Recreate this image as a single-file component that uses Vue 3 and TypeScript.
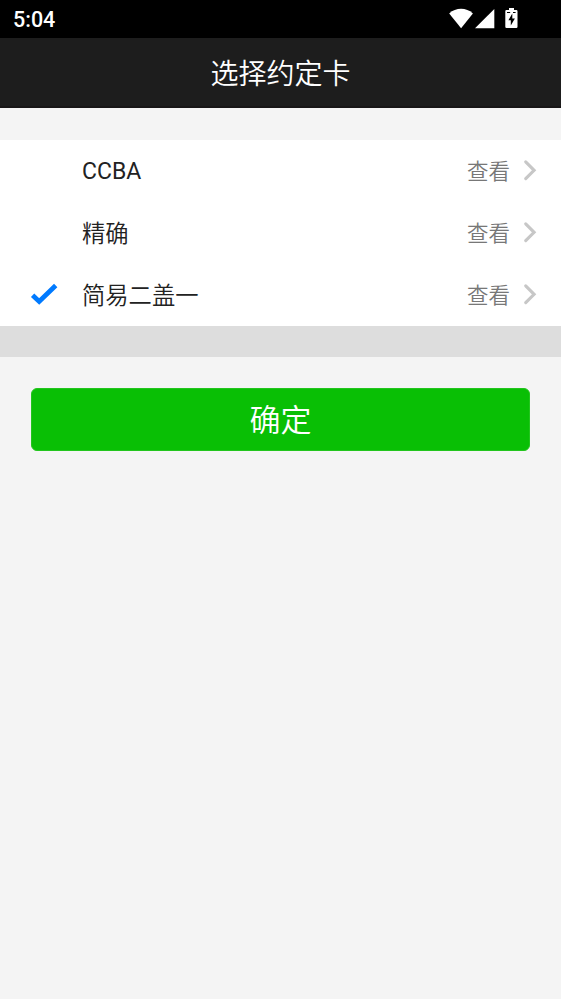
<script setup lang="ts">
import { ref } from 'vue'

interface Card {
  id: number
  name: string
  latin?: boolean
}

const cards: Card[] = [
  { id: 1, name: 'CCBA', latin: true },
  { id: 2, name: '精确' },
  { id: 3, name: '简易二盖一' },
]
const selected = ref<number>(3)
</script>

<template>
  <div class="screen">
    <div class="status">
      <span class="time">5:04</span>
      <svg class="indicators" width="72" height="38" viewBox="0 0 72 38">
        <path d="M1.2 13.4C7.8 7.2 18.3 7.2 24.9 13.4L13.1 28.2Z" fill="#fff" />
        <path d="M27 28.2H46.3V9Z" fill="#fff" />
        <path d="M61 8h5v2h2.3q1.2 0 1.2 1.2v15.6q0 1.2-1.2 1.2h-9.8q-1.2 0-1.2-1.2v-15.6q0-1.2 1.2-1.2H61Z" fill="#fff" />
        <path d="M59 12.5h3.2M65 12.5h2.6" stroke="#000" stroke-width="1" />
        <path d="M64.3 13.6L60.4 20.2H62.8V25.6L66.9 18.5H64.3Z" fill="#000" />
      </svg>
    </div>
    <header class="header">选择约定卡</header>
    <main>
      <ul class="list">
        <li v-for="card in cards" :key="card.id" class="row" @click="selected = card.id">
          <span class="mark">
            <svg v-if="selected === card.id" width="28" height="24" viewBox="0 0 28 24">
              <path d="M2.6 12.3L9.2 18.5L25.7 2.6" fill="none" stroke="#007aff" stroke-width="4.8" />
            </svg>
          </span>
          <span class="name" :class="{ latin: card.latin }">{{ card.name }}</span>
          <span class="view">查看</span>
          <svg class="arrow" width="16" height="24" viewBox="0 0 16 24">
            <path d="M3.7 2.9L12.1 11.3L3.7 19.7" fill="none" stroke="#c7c7c7" stroke-width="3.1" stroke-linecap="round" />
          </svg>
        </li>
      </ul>
      <div class="band"></div>
      <button class="confirm" type="button">确定</button>
    </main>
  </div>
</template>

<style>
body {
  background: #f4f4f4;
}
</style>

<style scoped>
.screen {
  height: 999px;
  overflow: hidden;
  background: #f4f4f4;
  font-family: Roboto, "Noto Sans CJK SC", sans-serif;
}
.status {
  display: flex;
  justify-content: space-between;
  height: 38px;
  padding: 0 41px 0 13px;
  box-sizing: border-box;
  background: #000;
  color: #fff;
}
.time {
  font-size: 21.5px;
  font-weight: 500;
  line-height: 39px;
}
.header {
  height: 70px;
  padding-top: 2px;
  box-sizing: border-box;
  border-bottom: 2px solid #181617;
  background: #1d1d1d;
  color: #fff;
  font-size: 28px;
  font-weight: 350;
  line-height: 69px;
  text-align: center;
}
.list {
  margin: 32px 0 0;
  padding: 0;
  list-style: none;
  background: #fff;
}
.row {
  display: flex;
  align-items: center;
  height: 62px;
  padding: 0 23px 0 30px;
  box-sizing: border-box;
}
.mark {
  width: 52px;
  height: 24px;
}
.name {
  flex: 1;
  padding-top: 1px;
  color: #222;
  font-size: 23.3px;
  font-weight: 350;
  line-height: 62px;
}
.latin {
  font-size: 23px;
  font-weight: 400;
}
.view {
  padding-top: 2px;
  color: #777;
  font-size: 21.5px;
  font-weight: 350;
  line-height: 62px;
}
.arrow {
  margin-left: 12px;
}
.band {
  height: 31px;
  background: #ddd;
}
.confirm {
  display: block;
  width: 499px;
  height: 63px;
  margin: 31px 0 0 31px;
  padding: 2px 0 0;
  border: 1px solid #22c51d;
  border-radius: 6px;
  background: #09bf05;
  color: #fff;
  font: 350 31px/60px Roboto, "Noto Sans CJK SC", sans-serif;
}
</style>
